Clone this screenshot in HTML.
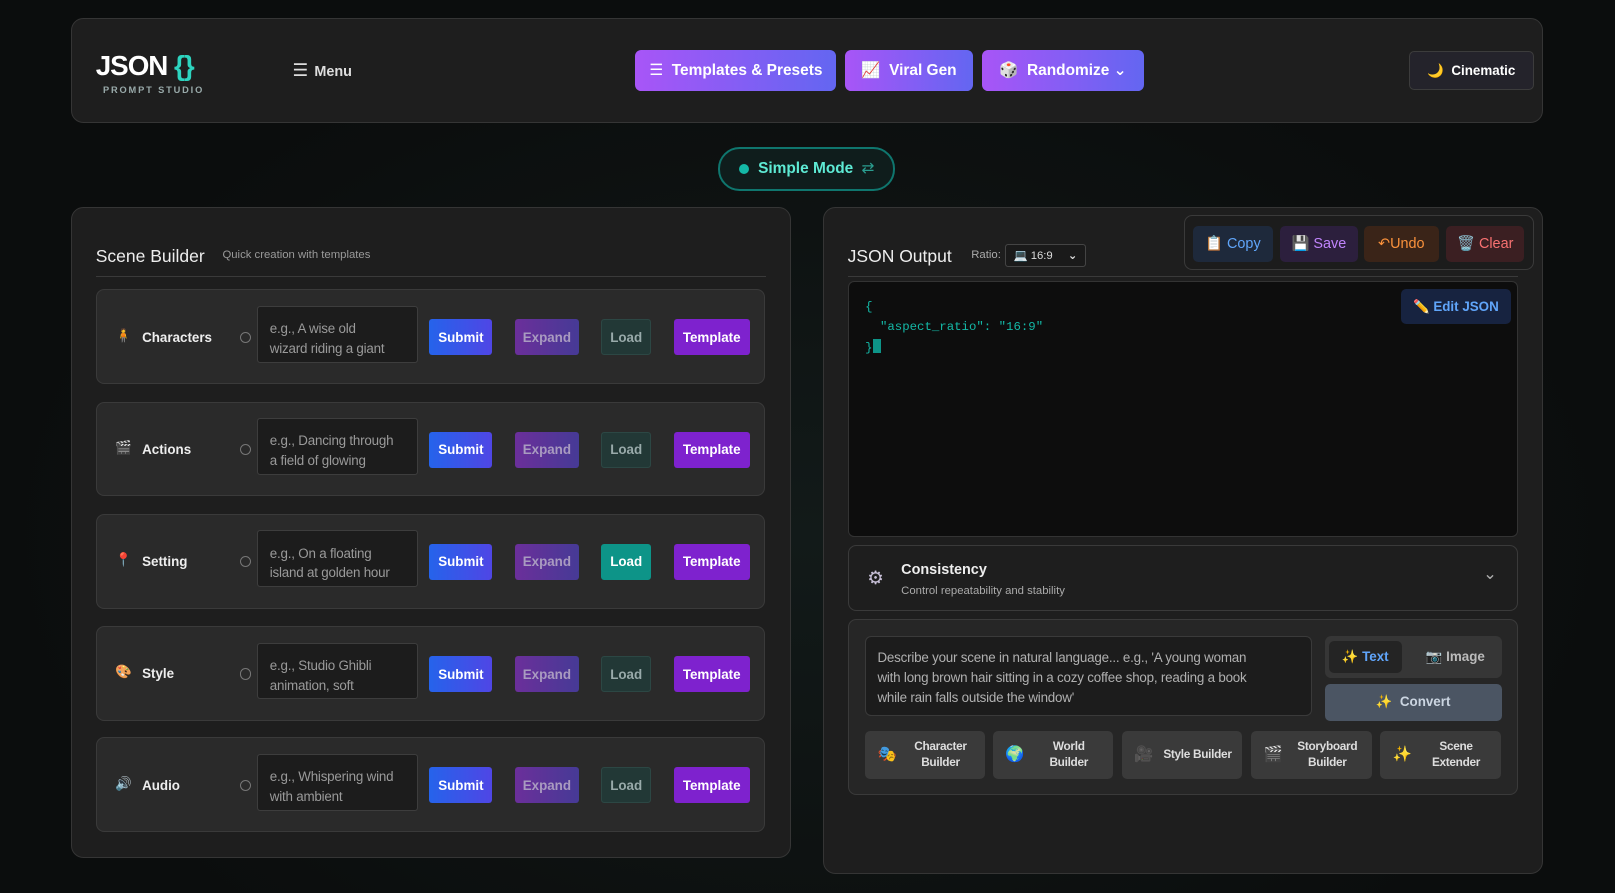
<!DOCTYPE html>
<html><head><meta charset="utf-8"><style>
*{box-sizing:border-box;margin:0;padding:0}
html,body{width:1615px;height:893px;overflow:hidden;background:#0b0d0d;font-family:"Liberation Sans","DejaVu Sans",sans-serif;color:#e5e5e5}
#w{zoom:1.03;width:1568px;height:867px;position:relative;background:radial-gradient(ellipse at 50% 60%,#121a19 0%,#0b0d0d 70%)}
.a{position:absolute}
.card{position:absolute;background:#1e1e1e;border:1px solid #353535;border-radius:12px}
.btn{position:absolute;display:flex;align-items:center;justify-content:center;border-radius:5px;font-weight:bold;font-size:14px;color:#fff;white-space:nowrap}
.grad{background:linear-gradient(90deg,#a855f7,#6366f1);font-size:15px;border-radius:6px}
.row{position:absolute;left:93px;width:650px;height:92px;background:#2a2a2a;border:1px solid #3a3a3a;border-radius:8px}
.row .ic{position:absolute;left:18px;top:36px;font-size:13px}
.row .lb{position:absolute;left:44px;top:38px;font-size:13px;font-weight:bold;color:#eee}
.row .rd{position:absolute;left:139px;top:40px;width:11px;height:11px;border:1px solid #777;border-radius:50%}
.row .in{position:absolute;left:156px;top:15px;width:156px;height:55px;background:#1c1c1c;border:1px solid #3d3d3d;border-radius:3px;padding:12px 11px;font-size:13px;line-height:19px;color:#9a9a9a;white-space:nowrap;overflow:hidden;letter-spacing:-0.2px}
.row .btn{top:28px;height:35px;font-size:13px;border-radius:3px}
.sub{left:323px;width:61px;background:linear-gradient(90deg,#2563eb,#4f46e5)}
.exp{left:406px;width:62px;background:linear-gradient(90deg,#6b2f9a,#463a96);color:#a99bc0!important}
.ld{left:490px;width:48px;background:#223836;border:1px solid #2c4744;color:#9aa!important}
.ld.on{background:#0d9488;border-color:#0d9488;color:#fff!important}
.tp{left:560px;width:74px;background:#7e22ce}
.sm{position:absolute;display:flex;align-items:center;justify-content:center;border-radius:5px;font-size:14px;white-space:nowrap}
.tool{position:absolute;top:108px;height:46px;background:#3a3a3a;border-radius:5px;display:flex;align-items:center;font-size:11.5px;font-weight:bold;color:#ddd;line-height:15px;letter-spacing:-0.3px}
.tool span.e{font-size:15px;margin:0 8px 0 12px}
.tool span.t{flex:1;text-align:center;padding-right:8px;white-space:nowrap}
</style></head><body><div id="w">
<div class="card" style="left:69px;top:17px;width:1429px;height:102px">
 <div class="a" style="left:23px;top:31px;font-size:27px;font-weight:bold;color:#fff;letter-spacing:-1px">JSON <span style="color:#2dd4bf">{}</span></div>
 <div class="a" style="left:30px;top:65px;font-size:9px;font-weight:bold;color:#9aa;letter-spacing:1.8px">PROMPT STUDIO</div>
 <div class="a" style="left:214px;top:40px;font-size:14px;font-weight:bold;color:#ddd"><span style="font-size:17px;font-weight:normal;margin-right:6px">☰</span>Menu</div>
 <div class="btn grad" style="left:547px;top:31px;width:195px;height:39px">☰&nbsp; Templates &amp; Presets</div>
 <div class="btn grad" style="left:750px;top:31px;width:125px;height:39px">📈&nbsp; Viral Gen</div>
 <div class="btn grad" style="left:883px;top:31px;width:158px;height:39px">🎲&nbsp; Randomize ⌄</div>
 <div class="btn" style="left:1298px;top:32px;width:121px;height:37px;background:#24232b;border:1px solid #3c3c3c;font-size:13px">🌙&nbsp; Cinematic</div>
</div>
<div class="a" style="left:697px;top:143px;width:172px;height:42px;border:2px solid #0f766e;border-radius:21px;background:#0f1d1c;display:flex;align-items:center;justify-content:center;font-size:15px;font-weight:bold;color:#5eead4"><span style="width:10px;height:10px;border-radius:50%;background:#14b8a6;margin-right:9px"></span>Simple Mode <span style="color:#2a9d8f;margin-left:8px;font-weight:normal">⇄</span></div>

<div class="card" style="left:69px;top:201px;width:699px;height:632px">
 <div class="a" style="left:23px;top:37px;font-size:17px;color:#eee">Scene Builder</div>
 <div class="a" style="left:146px;top:40px;font-size:11px;color:#9a9a9a">Quick creation with templates</div>
 <div class="a" style="left:23px;top:66px;width:651px;height:1px;background:#3a3a3a"></div>
</div>
<div class="row" style="top:281px"><span class="ic">🧍</span><span class="lb">Characters</span><span class="rd"></span><div class="in">e.g., A wise old<br>wizard riding a giant</div><div class="btn sub">Submit</div><div class="btn exp">Expand</div><div class="btn ld">Load</div><div class="btn tp">Template</div></div>
<div class="row" style="top:390px"><span class="ic">🎬</span><span class="lb">Actions</span><span class="rd"></span><div class="in">e.g., Dancing through<br>a field of glowing</div><div class="btn sub">Submit</div><div class="btn exp">Expand</div><div class="btn ld">Load</div><div class="btn tp">Template</div></div>
<div class="row" style="top:499px"><span class="ic">📍</span><span class="lb">Setting</span><span class="rd"></span><div class="in">e.g., On a floating<br>island at golden hour</div><div class="btn sub">Submit</div><div class="btn exp">Expand</div><div class="btn ld on">Load</div><div class="btn tp">Template</div></div>
<div class="row" style="top:608px"><span class="ic">🎨</span><span class="lb">Style</span><span class="rd"></span><div class="in">e.g., Studio Ghibli<br>animation, soft</div><div class="btn sub">Submit</div><div class="btn exp">Expand</div><div class="btn ld">Load</div><div class="btn tp">Template</div></div>
<div class="row" style="top:716px"><span class="ic">🔊</span><span class="lb">Audio</span><span class="rd"></span><div class="in">e.g., Whispering wind<br>with ambient</div><div class="btn sub">Submit</div><div class="btn exp">Expand</div><div class="btn ld">Load</div><div class="btn tp">Template</div></div>

<div class="card" style="left:799px;top:201px;width:699px;height:648px">
 <div class="a" style="left:23px;top:37px;font-size:17px;color:#eee">JSON Output</div>
 <div class="a" style="left:143px;top:40px;font-size:11px;color:#aaa">Ratio:</div>
 <div class="a" style="left:176px;top:35px;width:78px;height:22px;border:1px solid #444;border-radius:3px;background:#1a1a1a;font-size:11px;color:#ddd;padding:3px 7px">💻 16:9 <span style="float:right;font-weight:bold">⌄</span></div>
 <div class="a" style="left:350px;top:7px;width:339px;height:53px;border:1px solid #3a3a3a;border-radius:8px;background:#1c1c1c"></div>
 <div class="sm" style="left:358px;top:17px;width:78px;height:35px;background:#1e293b;color:#60a5fa">📋&nbsp;Copy</div>
 <div class="sm" style="left:443px;top:17px;width:75px;height:35px;background:#2c1f3d;color:#c084fc">💾&nbsp;Save</div>
 <div class="sm" style="left:524px;top:17px;width:73px;height:35px;background:#3a2418;color:#fb923c">↶Undo</div>
 <div class="sm" style="left:604px;top:17px;width:76px;height:35px;background:#3b1f22;color:#f87171">🗑️&nbsp;Clear</div>
 <div class="a" style="left:23px;top:66px;width:651px;height:1px;background:#3a3a3a"></div>
 <div class="a" style="left:23px;top:71px;width:651px;height:248px;background:#0d0d0d;border:1px solid #333;border-radius:6px;font-family:'Liberation Mono',monospace;font-size:12px;line-height:20px;color:#14b8a6;padding:14px 16px;white-space:pre">{
  "aspect_ratio": "16:9"
}<span style="display:inline-block;width:8px;height:13px;background:#0d9488;vertical-align:-2px"></span></div>
 <div class="sm" style="left:560px;top:79px;width:107px;height:34px;background:#172340;color:#60a5fa;font-weight:bold;font-size:13px">✏️&nbsp;Edit JSON</div>
 <div class="a" style="left:23px;top:327px;width:651px;height:64px;border:1px solid #3a3a3a;border-radius:8px;background:#1e1e1e">
  <span class="a" style="left:18px;top:21px;font-size:18px;color:#c8c0d8">⚙</span>
  <span class="a" style="left:51px;top:16px;font-size:14px;font-weight:bold;color:#eee">Consistency</span>
  <span class="a" style="left:51px;top:38px;font-size:11px;color:#aaa">Control repeatability and stability</span>
  <span class="a" style="left:616px;top:18px;font-size:16px;color:#aaa">⌄</span>
 </div>
 <div class="a" style="left:23px;top:399px;width:651px;height:171px;border:1px solid #3a3a3a;border-radius:8px;background:#262626">
  <div class="a" style="left:16px;top:16px;width:434px;height:77px;background:#1c1c1c;border:1px solid #3a3a3a;border-radius:6px;padding:10px 11px;font-size:13px;line-height:19.5px;color:#b0b0b0;white-space:nowrap;overflow:hidden;letter-spacing:-0.2px">Describe your scene in natural language... e.g., 'A young woman<br>with long brown hair sitting in a cozy coffee shop, reading a book<br>while rain falls outside the window'</div>
  <div class="a" style="left:462px;top:16px;width:172px;height:40px;background:#363636;border-radius:6px"></div>
  <div class="sm" style="left:466px;top:20px;width:71px;height:31px;background:#242424;color:#60a5fa;font-size:13px;font-weight:bold">✨&nbsp;Text</div>
  <div class="sm" style="left:548px;top:20px;width:82px;height:31px;color:#bbb;font-size:13px;font-weight:bold">📷&nbsp;Image</div>
  <div class="sm" style="left:462px;top:62px;width:172px;height:36px;background:#4b5563;color:#cbd5e1;font-size:13px;font-weight:bold">✨&nbsp; Convert</div>
  <div class="tool" style="left:16px;width:116px"><span class="e">🎭</span><span class="t">Character<br>Builder</span></div>
  <div class="tool" style="left:140px;width:117px"><span class="e">🌍</span><span class="t">World<br>Builder</span></div>
  <div class="tool" style="left:265px;width:117px"><span class="e">🎥</span><span class="t">Style Builder</span></div>
  <div class="tool" style="left:391px;width:117px"><span class="e">🎬</span><span class="t">Storyboard<br>Builder</span></div>
  <div class="tool" style="left:516px;width:117px"><span class="e">✨</span><span class="t">Scene<br>Extender</span></div>
 </div>
</div>
</div></body></html>
